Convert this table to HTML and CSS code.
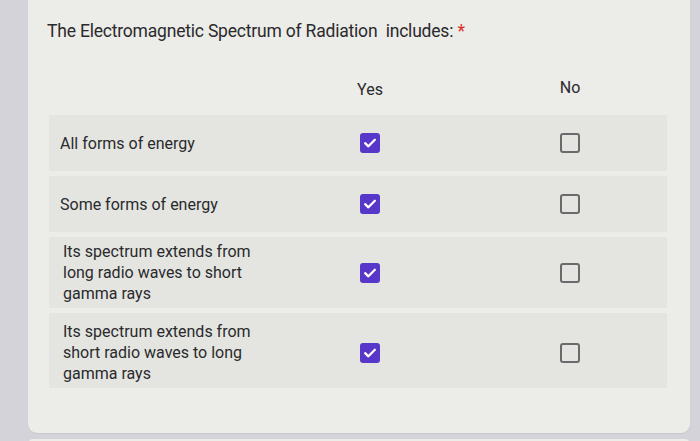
FILE: index.html
```html
<!DOCTYPE html>
<html>
<head>
<meta charset="utf-8">
<link rel="stylesheet" href="styles.css">
</head>
<body>
<div class="page">
  <div class="card">
    <div class="title">The Electromagnetic Spectrum of Radiation&nbsp; includes: <span class="req">*</span></div>
    <div class="grid">
      <div class="head">
        <div></div>
        <div class="col">Yes</div>
        <div class="col no">No</div>
      </div>
      <div class="row">
        <div class="label">All forms of energy</div>
        <div class="col"><span class="box checked"><svg viewBox="0 0 20 20" width="20" height="20"><path d="M4.6 10.2l3.6 3.5L15.4 6.4" fill="none" stroke="#fff" stroke-width="2.5" stroke-linecap="round" stroke-linejoin="round"/></svg></span></div>
        <div class="col no"><span class="box"></span></div>
      </div>
      <div class="row">
        <div class="label">Some forms of energy</div>
        <div class="col"><span class="box checked"><svg viewBox="0 0 20 20" width="20" height="20"><path d="M4.6 10.2l3.6 3.5L15.4 6.4" fill="none" stroke="#fff" stroke-width="2.5" stroke-linecap="round" stroke-linejoin="round"/></svg></span></div>
        <div class="col no"><span class="box"></span></div>
      </div>
      <div class="row tall">
        <div class="label">Its spectrum extends from long radio waves to short gamma rays</div>
        <div class="col"><span class="box checked"><svg viewBox="0 0 20 20" width="20" height="20"><path d="M4.6 10.2l3.6 3.5L15.4 6.4" fill="none" stroke="#fff" stroke-width="2.5" stroke-linecap="round" stroke-linejoin="round"/></svg></span></div>
        <div class="col no"><span class="box"></span></div>
      </div>
      <div class="row tall last">
        <div class="label">Its spectrum extends from short radio waves to long gamma rays</div>
        <div class="col"><span class="box checked"><svg viewBox="0 0 20 20" width="20" height="20"><path d="M4.6 10.2l3.6 3.5L15.4 6.4" fill="none" stroke="#fff" stroke-width="2.5" stroke-linecap="round" stroke-linejoin="round"/></svg></span></div>
        <div class="col no"><span class="box"></span></div>
      </div>
    </div>
  </div>
  <div class="card next"></div>
</div>
</body>
</html>
```

FILE: styles.css
```css
html, body {
  margin: 0;
  padding: 0;
  height: 100%;
  overflow: hidden;
}
body {
  background: #d4d3da;
  font-family: Roboto, "Liberation Sans", sans-serif;
  color: #2a2a2c;
}
.page {
  padding: 0 10px 0 28px;
}
.card {
  background: #ecece8;
  border-radius: 0 0 9px 9px;
  padding: 19px 20px 40px 20px;
  box-shadow: 0 1px 1px rgba(0,0,0,0.06);
}
.card.next {
  margin-top: 6px;
  border-radius: 9px 9px 0 0;
  padding: 0;
  height: 5px;
}
.title {
  font-size: 17.5px;
  line-height: 24px;
  margin-left: -1px;
  letter-spacing: -0.2px;
}
.req {
  color: #d93025;
}
.grid {
  margin-top: 20px;
  width: 618px;
  margin-left: 1px;
}
.head, .row {
  display: grid;
  grid-template-columns: 256px 130px 1fr;
  align-items: center;
}
.head {
  height: 50px;
  font-size: 16px;
  margin-bottom: 2px;
}
.head .col {
  margin-top: 2px;
}
.head .no {
  margin-top: -2px;
}
.row {
  background: #e4e5e1;
  min-height: 56px;
  padding: 4px 0;
  box-sizing: border-box;
  margin-bottom: 5px;
  font-size: 16px;
  line-height: 21px;
}
.row.last {
  padding: 8px 0 4px;
}
.label {
  padding-left: 11px;
  padding-right: 50px;
}
.tall .label {
  padding-left: 14px;
}
.col {
  display: flex;
  justify-content: center;
}
.col.no {
  padding-left: 38px;
}
.box {
  width: 20px;
  height: 20px;
  box-sizing: border-box;
  border: 2px solid #6a6a6c;
  border-radius: 3px;
  display: flex;
  align-items: center;
  justify-content: center;
}
.box.checked {
  background: #5637c9;
  border-color: #5637c9;
}
.box svg {
  width: 18px;
  height: 18px;
  flex: none;
}
```
